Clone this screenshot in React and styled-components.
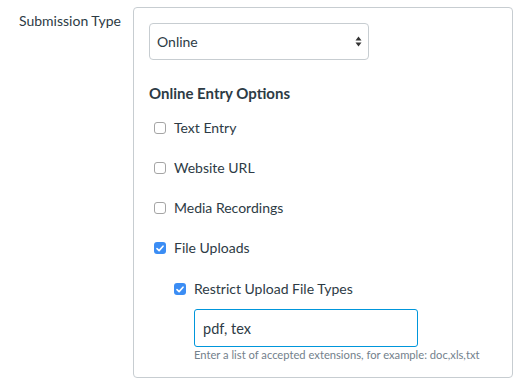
import React from 'react';
import styled, { createGlobalStyle } from 'styled-components';

const GlobalStyle = createGlobalStyle`
    body {
        margin: 0;
        background: #fff;
        font-family: Lato, "Open Sans", sans-serif;
        color: #2d3b45;
    }
`;

function Check({ checked, children }) {
    return (
        <CheckRow>
            <Box checked={checked}>
                {checked && (
                    <svg width="8" height="7" viewBox="0 0 8 7">
                        <path d="M1 3.6 L3.1 5.6 L7 1.2" fill="none" stroke="#fff" strokeWidth="1.6" strokeLinecap="round" strokeLinejoin="round" />
                    </svg>
                )}
            </Box>
            <span>{children}</span>
        </CheckRow>
    );
}

function App() {
    return (
        <Page>
            <GlobalStyle />
            <Label>Submission Type</Label>
            <Panel>
                <Select>
                    <span>Online</span>
                    <svg width="7" height="11" viewBox="0 0 7 11">
                        <path d="M3.5 0.5 L6.5 4.5 L0.5 4.5 Z" fill="#333" />
                        <path d="M3.5 10.5 L6.5 6.5 L0.5 6.5 Z" fill="#333" />
                    </svg>
                </Select>
                <Heading>Online Entry Options</Heading>
                <Options>
                    <Check>Text Entry</Check>
                    <Check>Website URL</Check>
                    <Check>Media Recordings</Check>
                    <Check checked>File Uploads</Check>
                </Options>
                <SubOptions>
                    <Check checked>Restrict Upload File Types</Check>
                    <Field>
                        <Input>pdf, tex</Input>
                        <Help>Enter a list of accepted extensions, for example: doc,xls,txt</Help>
                    </Field>
                </SubOptions>
            </Panel>
        </Page>
    );
}

export default App;

const Page = styled.div`
    display: flex;
    align-items: flex-start;
    padding-top: 7px;
`;
const Label = styled.div`
    flex: 0 0 133px;
    box-sizing: border-box;
    padding-left: 19px;
    margin-top: 4px;
    white-space: nowrap;
    font-size: 14px;
    line-height: 20px;
`;
const Panel = styled.div`
    flex: 0 0 380px;
    box-sizing: border-box;
    border: 1px solid #c7cdd1;
    border-radius: 4px;
    padding: 15px 15px 15px;
`;
const Select = styled.div`
    width: 220px;
    height: 37px;
    box-sizing: border-box;
    border: 1px solid #c7cdd1;
    border-radius: 4px;
    display: flex;
    align-items: center;
    justify-content: space-between;
    padding: 0 6px 0 7px;
    font-size: 14px;
    background: #fff;
`;
const Heading = styled.div`
    margin-top: 23px;
    font-size: 15px;
    font-weight: 700;
    line-height: 20px;
`;
const Options = styled.div`
    margin-top: 15px;
    display: flex;
    flex-direction: column;
    gap: 20px;
`;
const CheckRow = styled.div`
    display: flex;
    align-items: center;
    gap: 8px;
    padding-left: 5px;
    font-size: 14px;
    line-height: 20px;
`;
const Box = styled.span`
    width: 12px;
    height: 12px;
    box-sizing: border-box;
    border-radius: 3px;
    display: flex;
    align-items: center;
    justify-content: center;
    border: ${p => (p.checked ? 'none' : '1px solid #a5a5a5')};
    background: ${p => (p.checked ? '#3b8df4' : '#fff')};
`;
const SubOptions = styled.div`
    margin-top: 21px;
    padding-left: 20px;
`;
const Field = styled.div`
    margin-top: 10px;
    padding-left: 25px;
`;
const Input = styled.div`
    width: 224px;
    height: 38px;
    box-sizing: border-box;
    border: 1px solid #0096db;
    border-radius: 3px;
    display: flex;
    align-items: center;
    padding-left: 8px;
    font-size: 14.5px;
`;
const Help = styled.div`
    margin-top: 1px;
    font-size: 11.2px;
    line-height: 14px;
    color: #73818c;
`;
